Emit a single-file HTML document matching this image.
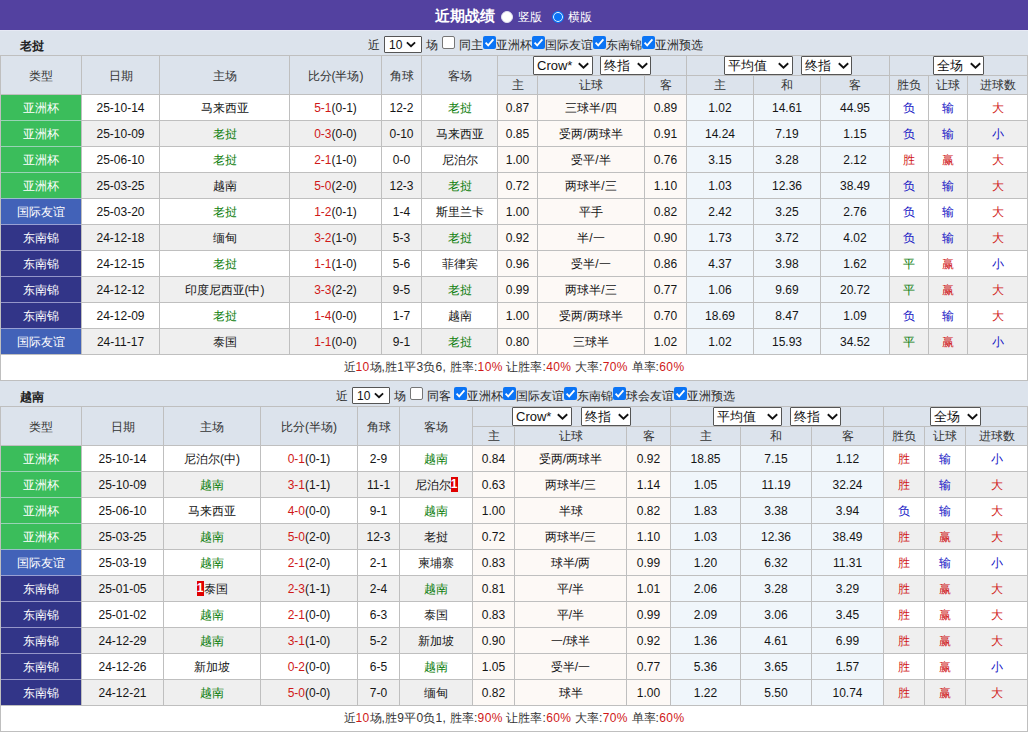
<!DOCTYPE html>
<html><head><meta charset="utf-8"><title>近期战绩</title><style>
*{margin:0;padding:0;box-sizing:border-box}
html,body{width:1029px;height:732px;overflow:hidden;background:#fff}
body{position:relative;font-family:"Liberation Sans",sans-serif;font-size:12px;color:#333}
.r{position:absolute}
.a{letter-spacing:0.37px}
.t{position:absolute;text-align:center;white-space:nowrap}
.sel{position:absolute;background:#fff;border:1px solid #555;border-radius:1px;color:#111;white-space:nowrap}
.cb{position:absolute;width:13px;height:13px;border:1px solid #767676;border-radius:2px;background:#fff}
.cb.on{background:#0b74f5;border:none}
.cb svg{position:absolute;left:0;top:0}
.rad{position:absolute;width:12px;height:12px;border-radius:50%;background:#fff;border:1px solid #e0e0f0}
.rad.on{background:#0a74f5;border:1px solid #0a74f5;box-shadow:inset 0 0 0 1px #fff}

.bd{display:inline-block;background:#e00000;color:#fff;font-weight:bold;width:7px;height:15px;line-height:15px;font-size:12px;text-align:center;vertical-align:-3px;overflow:hidden}
</style></head>
<body>
<div class="r" style="left:0px;top:0px;width:1028px;height:30px;background:#5341a0;"></div><div class="r" style="left:0px;top:30px;width:1028px;height:1px;background:#e6e9f4;"></div><div class="t" style="left:435px;top:1px;width:62px;height:30px;line-height:30px;text-align:left;font-weight:bold;font-size:15px;color:#fff">近期战绩</div><div class="rad" style="left:501px;top:11px"></div><div class="t" style="left:518px;top:2px;width:30px;height:30px;line-height:30px;text-align:left;color:#fff">竖版</div><div class="rad on" style="left:552px;top:11px"></div><div class="t" style="left:568px;top:2px;width:30px;height:30px;line-height:30px;text-align:left;color:#fff">横版</div><div class="r" style="left:0px;top:30px;width:1028px;height:25px;background:#dce3ec;"></div><div class="t" style="left:20px;top:34px;width:60px;height:25px;line-height:25px;text-align:left;font-weight:bold;color:#222">老挝</div><div class="t" style="left:368px;top:33px;width:16px;height:25px;line-height:25px;text-align:left;color:#2a2a2a">近</div><div class="sel" style="left:384px;top:36px;width:38px;height:17px;"><span style="position:absolute;left:4px;top:1px;line-height:15px;font-size:12px">10</span><svg style="position:absolute;left:21px;top:4px" width="10" height="7" viewBox="0 0 10 7"><path d="M0.9 1.3 L5 5.2 L9.1 1.3" fill="none" stroke="#111" stroke-width="1.8"/></svg></div><div class="t" style="left:426px;top:33px;width:16px;height:25px;line-height:25px;text-align:left;color:#2a2a2a">场</div><div class="cb" style="left:442px;top:36px"></div><div class="t" style="left:459px;top:33px;width:28px;height:25px;line-height:25px;text-align:left;color:#2a2a2a">同主</div><div class="cb on" style="left:483px;top:36px"><svg width="13" height="13" viewBox="0 0 13 13"><path d="M2.6 6.6 L5.2 9.3 L10.4 3.4" fill="none" stroke="#fff" stroke-width="1.8"/></svg></div><div class="t" style="left:496px;top:33px;width:40px;height:25px;line-height:25px;text-align:left;color:#2a2a2a">亚洲杯</div><div class="cb on" style="left:532px;top:36px"><svg width="13" height="13" viewBox="0 0 13 13"><path d="M2.6 6.6 L5.2 9.3 L10.4 3.4" fill="none" stroke="#fff" stroke-width="1.8"/></svg></div><div class="t" style="left:545px;top:33px;width:52px;height:25px;line-height:25px;text-align:left;color:#2a2a2a">国际友谊</div><div class="cb on" style="left:593px;top:36px"><svg width="13" height="13" viewBox="0 0 13 13"><path d="M2.6 6.6 L5.2 9.3 L10.4 3.4" fill="none" stroke="#fff" stroke-width="1.8"/></svg></div><div class="t" style="left:606px;top:33px;width:40px;height:25px;line-height:25px;text-align:left;color:#2a2a2a">东南锦</div><div class="cb on" style="left:642px;top:36px"><svg width="13" height="13" viewBox="0 0 13 13"><path d="M2.6 6.6 L5.2 9.3 L10.4 3.4" fill="none" stroke="#fff" stroke-width="1.8"/></svg></div><div class="t" style="left:655px;top:33px;width:52px;height:25px;line-height:25px;text-align:left;color:#2a2a2a">亚洲预选</div><div class="r" style="left:0px;top:30px;width:1028px;height:1px;background:#e6e9f4;"></div><div class="r" style="left:0px;top:55px;width:1027px;height:39px;background:#dce3ec;"></div><div class="r" style="left:0px;top:94px;width:1027px;height:26px;background:#ffffff;"></div><div class="r" style="left:497px;top:94px;width:189px;height:26px;background:#fdf9f6;"></div><div class="r" style="left:686px;top:94px;width:203px;height:26px;background:#f0f6fb;"></div><div class="r" style="left:0px;top:94px;width:81px;height:26px;background:#3bbd5b;"></div><div class="r" style="left:0px;top:120px;width:1027px;height:26px;background:#efefef;"></div><div class="r" style="left:497px;top:120px;width:189px;height:26px;background:#fdf9f6;"></div><div class="r" style="left:686px;top:120px;width:203px;height:26px;background:#f0f6fb;"></div><div class="r" style="left:0px;top:120px;width:81px;height:26px;background:#3bbd5b;"></div><div class="r" style="left:0px;top:146px;width:1027px;height:26px;background:#ffffff;"></div><div class="r" style="left:497px;top:146px;width:189px;height:26px;background:#fdf9f6;"></div><div class="r" style="left:686px;top:146px;width:203px;height:26px;background:#f0f6fb;"></div><div class="r" style="left:0px;top:146px;width:81px;height:26px;background:#3bbd5b;"></div><div class="r" style="left:0px;top:172px;width:1027px;height:26px;background:#efefef;"></div><div class="r" style="left:497px;top:172px;width:189px;height:26px;background:#fdf9f6;"></div><div class="r" style="left:686px;top:172px;width:203px;height:26px;background:#f0f6fb;"></div><div class="r" style="left:0px;top:172px;width:81px;height:26px;background:#3bbd5b;"></div><div class="r" style="left:0px;top:198px;width:1027px;height:26px;background:#ffffff;"></div><div class="r" style="left:497px;top:198px;width:189px;height:26px;background:#fdf9f6;"></div><div class="r" style="left:686px;top:198px;width:203px;height:26px;background:#f0f6fb;"></div><div class="r" style="left:0px;top:198px;width:81px;height:26px;background:#4262b8;"></div><div class="r" style="left:0px;top:224px;width:1027px;height:26px;background:#efefef;"></div><div class="r" style="left:497px;top:224px;width:189px;height:26px;background:#fdf9f6;"></div><div class="r" style="left:686px;top:224px;width:203px;height:26px;background:#f0f6fb;"></div><div class="r" style="left:0px;top:224px;width:81px;height:26px;background:#323588;"></div><div class="r" style="left:0px;top:250px;width:1027px;height:26px;background:#ffffff;"></div><div class="r" style="left:497px;top:250px;width:189px;height:26px;background:#fdf9f6;"></div><div class="r" style="left:686px;top:250px;width:203px;height:26px;background:#f0f6fb;"></div><div class="r" style="left:0px;top:250px;width:81px;height:26px;background:#323588;"></div><div class="r" style="left:0px;top:276px;width:1027px;height:26px;background:#efefef;"></div><div class="r" style="left:497px;top:276px;width:189px;height:26px;background:#fdf9f6;"></div><div class="r" style="left:686px;top:276px;width:203px;height:26px;background:#f0f6fb;"></div><div class="r" style="left:0px;top:276px;width:81px;height:26px;background:#323588;"></div><div class="r" style="left:0px;top:302px;width:1027px;height:26px;background:#ffffff;"></div><div class="r" style="left:497px;top:302px;width:189px;height:26px;background:#fdf9f6;"></div><div class="r" style="left:686px;top:302px;width:203px;height:26px;background:#f0f6fb;"></div><div class="r" style="left:0px;top:302px;width:81px;height:26px;background:#323588;"></div><div class="r" style="left:0px;top:328px;width:1027px;height:26px;background:#efefef;"></div><div class="r" style="left:497px;top:328px;width:189px;height:26px;background:#fdf9f6;"></div><div class="r" style="left:686px;top:328px;width:203px;height:26px;background:#f0f6fb;"></div><div class="r" style="left:0px;top:328px;width:81px;height:26px;background:#4262b8;"></div><div class="r" style="left:0px;top:354px;width:1027px;height:26px;background:#ffffff;"></div><div class="r" style="left:0px;top:55px;width:1027px;height:1px;background:#bfbfbf;"></div><div class="r" style="left:497px;top:75px;width:530px;height:1px;background:#bfbfbf;"></div><div class="r" style="left:0px;top:94px;width:1027px;height:1px;background:#bfbfbf;"></div><div class="r" style="left:0px;top:120px;width:1027px;height:1px;background:#bfbfbf;"></div><div class="r" style="left:0px;top:146px;width:1027px;height:1px;background:#bfbfbf;"></div><div class="r" style="left:0px;top:172px;width:1027px;height:1px;background:#bfbfbf;"></div><div class="r" style="left:0px;top:198px;width:1027px;height:1px;background:#bfbfbf;"></div><div class="r" style="left:0px;top:224px;width:1027px;height:1px;background:#bfbfbf;"></div><div class="r" style="left:0px;top:250px;width:1027px;height:1px;background:#bfbfbf;"></div><div class="r" style="left:0px;top:276px;width:1027px;height:1px;background:#bfbfbf;"></div><div class="r" style="left:0px;top:302px;width:1027px;height:1px;background:#bfbfbf;"></div><div class="r" style="left:0px;top:328px;width:1027px;height:1px;background:#bfbfbf;"></div><div class="r" style="left:0px;top:354px;width:1027px;height:1px;background:#bfbfbf;"></div><div class="r" style="left:0px;top:380px;width:1027px;height:1px;background:#bfbfbf;"></div><div class="r" style="left:0px;top:55px;width:1px;height:326px;background:#bfbfbf;"></div><div class="r" style="left:81px;top:55px;width:1px;height:299px;background:#bfbfbf;"></div><div class="r" style="left:159px;top:55px;width:1px;height:299px;background:#bfbfbf;"></div><div class="r" style="left:289px;top:55px;width:1px;height:299px;background:#bfbfbf;"></div><div class="r" style="left:381px;top:55px;width:1px;height:299px;background:#bfbfbf;"></div><div class="r" style="left:421px;top:55px;width:1px;height:299px;background:#bfbfbf;"></div><div class="r" style="left:497px;top:55px;width:1px;height:299px;background:#bfbfbf;"></div><div class="r" style="left:537px;top:75px;width:1px;height:279px;background:#bfbfbf;"></div><div class="r" style="left:644px;top:75px;width:1px;height:279px;background:#bfbfbf;"></div><div class="r" style="left:686px;top:55px;width:1px;height:299px;background:#bfbfbf;"></div><div class="r" style="left:753px;top:75px;width:1px;height:279px;background:#bfbfbf;"></div><div class="r" style="left:820px;top:75px;width:1px;height:279px;background:#bfbfbf;"></div><div class="r" style="left:889px;top:55px;width:1px;height:299px;background:#bfbfbf;"></div><div class="r" style="left:928px;top:75px;width:1px;height:279px;background:#bfbfbf;"></div><div class="r" style="left:967px;top:75px;width:1px;height:279px;background:#bfbfbf;"></div><div class="r" style="left:1027px;top:55px;width:1px;height:326px;background:#bfbfbf;"></div><div class="r" style="left:1px;top:120px;width:80px;height:1px;background:rgb(153,211,181);"></div><div class="r" style="left:1px;top:146px;width:80px;height:1px;background:rgb(153,211,181);"></div><div class="r" style="left:1px;top:172px;width:80px;height:1px;background:rgb(153,211,181);"></div><div class="r" style="left:1px;top:198px;width:80px;height:1px;background:rgb(154,191,202);"></div><div class="r" style="left:1px;top:224px;width:80px;height:1px;background:rgb(152,160,212);"></div><div class="r" style="left:1px;top:250px;width:80px;height:1px;background:rgb(149,150,201);"></div><div class="r" style="left:1px;top:276px;width:80px;height:1px;background:rgb(149,150,201);"></div><div class="r" style="left:1px;top:302px;width:80px;height:1px;background:rgb(149,150,201);"></div><div class="r" style="left:1px;top:328px;width:80px;height:1px;background:rgb(152,160,212);"></div><div class="t" style="left:1px;top:57px;width:80px;height:38px;line-height:38px;color:#333">类型</div><div class="t" style="left:82px;top:57px;width:77px;height:38px;line-height:38px;color:#333">日期</div><div class="t" style="left:160px;top:57px;width:129px;height:38px;line-height:38px;color:#333">主场</div><div class="t" style="left:290px;top:57px;width:91px;height:38px;line-height:38px;color:#333">比分(半场)</div><div class="t" style="left:382px;top:57px;width:39px;height:38px;line-height:38px;color:#333">角球</div><div class="t" style="left:422px;top:57px;width:75px;height:38px;line-height:38px;color:#333">客场</div><div class="t" style="left:498px;top:76px;width:39px;height:18px;line-height:18px;color:#333">主</div><div class="t" style="left:538px;top:76px;width:106px;height:18px;line-height:18px;color:#333">让球</div><div class="t" style="left:645px;top:76px;width:41px;height:18px;line-height:18px;color:#333">客</div><div class="t" style="left:687px;top:76px;width:66px;height:18px;line-height:18px;color:#333">主</div><div class="t" style="left:754px;top:76px;width:66px;height:18px;line-height:18px;color:#333">和</div><div class="t" style="left:821px;top:76px;width:68px;height:18px;line-height:18px;color:#333">客</div><div class="t" style="left:890px;top:76px;width:38px;height:18px;line-height:18px;color:#333">胜负</div><div class="t" style="left:929px;top:76px;width:38px;height:18px;line-height:18px;color:#333">让球</div><div class="t" style="left:968px;top:76px;width:59px;height:18px;line-height:18px;color:#333">进球数</div><div class="sel" style="left:533px;top:56px;width:60px;height:19px;"><span style="position:absolute;left:3px;top:0px;line-height:17px;font-size:13px">Crow*</span><svg style="position:absolute;left:44px;top:5px" width="11" height="7" viewBox="0 0 11 7"><path d="M0.8 1.2 L5.5 5.6 L10.2 1.2" fill="none" stroke="#111" stroke-width="1.9"/></svg></div><div class="sel" style="left:600px;top:56px;width:51px;height:19px;"><span style="position:absolute;left:3px;top:0px;line-height:17px;font-size:13px">终指</span><svg style="position:absolute;left:36px;top:5px" width="11" height="7" viewBox="0 0 11 7"><path d="M0.8 1.2 L5.5 5.6 L10.2 1.2" fill="none" stroke="#111" stroke-width="1.9"/></svg></div><div class="sel" style="left:724px;top:56px;width:69px;height:19px;"><span style="position:absolute;left:3px;top:0px;line-height:17px;font-size:13px">平均值</span><svg style="position:absolute;left:53px;top:5px" width="11" height="7" viewBox="0 0 11 7"><path d="M0.8 1.2 L5.5 5.6 L10.2 1.2" fill="none" stroke="#111" stroke-width="1.9"/></svg></div><div class="sel" style="left:801px;top:56px;width:51px;height:19px;"><span style="position:absolute;left:3px;top:0px;line-height:17px;font-size:13px">终指</span><svg style="position:absolute;left:36px;top:5px" width="11" height="7" viewBox="0 0 11 7"><path d="M0.8 1.2 L5.5 5.6 L10.2 1.2" fill="none" stroke="#111" stroke-width="1.9"/></svg></div><div class="sel" style="left:933px;top:56px;width:51px;height:19px;"><span style="position:absolute;left:3px;top:0px;line-height:17px;font-size:13px">全场</span><svg style="position:absolute;left:36px;top:5px" width="11" height="7" viewBox="0 0 11 7"><path d="M0.8 1.2 L5.5 5.6 L10.2 1.2" fill="none" stroke="#111" stroke-width="1.9"/></svg></div><div class="t" style="left:1px;top:96px;width:80px;height:25px;line-height:25px;color:#fff">亚洲杯</div><div class="t" style="left:82px;top:96px;width:77px;height:25px;line-height:25px;color:#151515">25-10-14</div><div class="t" style="left:160px;top:96px;width:129px;height:25px;line-height:25px;color:#151515">马来西亚</div><div class="t" style="left:290px;top:96px;width:91px;height:25px;line-height:25px;color:#151515"><span style="color:#d01818">5-1</span>(0-1)</div><div class="t" style="left:382px;top:96px;width:39px;height:25px;line-height:25px;color:#151515">12-2</div><div class="t" style="left:422px;top:96px;width:75px;height:25px;line-height:25px;color:#151515"><span style="color:#0b7d0b">老挝</span></div><div class="t" style="left:498px;top:96px;width:39px;height:25px;line-height:25px;color:#151515">0.87</div><div class="t" style="left:538px;top:96px;width:106px;height:25px;line-height:25px;color:#151515">三球半/四</div><div class="t" style="left:645px;top:96px;width:41px;height:25px;line-height:25px;color:#151515">0.89</div><div class="t" style="left:687px;top:96px;width:66px;height:25px;line-height:25px;color:#151515">1.02</div><div class="t" style="left:754px;top:96px;width:66px;height:25px;line-height:25px;color:#151515">14.61</div><div class="t" style="left:821px;top:96px;width:68px;height:25px;line-height:25px;color:#151515">44.95</div><div class="t" style="left:890px;top:96px;width:38px;height:25px;line-height:25px;color:#151515"><span style="color:#1212c4">负</span></div><div class="t" style="left:929px;top:96px;width:38px;height:25px;line-height:25px;color:#151515"><span style="color:#1212c4">输</span></div><div class="t" style="left:968px;top:96px;width:59px;height:25px;line-height:25px;color:#151515"><span style="color:#d01818">大</span></div><div class="t" style="left:1px;top:122px;width:80px;height:25px;line-height:25px;color:#fff">亚洲杯</div><div class="t" style="left:82px;top:122px;width:77px;height:25px;line-height:25px;color:#151515">25-10-09</div><div class="t" style="left:160px;top:122px;width:129px;height:25px;line-height:25px;color:#151515"><span style="color:#0b7d0b">老挝</span></div><div class="t" style="left:290px;top:122px;width:91px;height:25px;line-height:25px;color:#151515"><span style="color:#d01818">0-3</span>(0-0)</div><div class="t" style="left:382px;top:122px;width:39px;height:25px;line-height:25px;color:#151515">0-10</div><div class="t" style="left:422px;top:122px;width:75px;height:25px;line-height:25px;color:#151515">马来西亚</div><div class="t" style="left:498px;top:122px;width:39px;height:25px;line-height:25px;color:#151515">0.85</div><div class="t" style="left:538px;top:122px;width:106px;height:25px;line-height:25px;color:#151515">受两/两球半</div><div class="t" style="left:645px;top:122px;width:41px;height:25px;line-height:25px;color:#151515">0.91</div><div class="t" style="left:687px;top:122px;width:66px;height:25px;line-height:25px;color:#151515">14.24</div><div class="t" style="left:754px;top:122px;width:66px;height:25px;line-height:25px;color:#151515">7.19</div><div class="t" style="left:821px;top:122px;width:68px;height:25px;line-height:25px;color:#151515">1.15</div><div class="t" style="left:890px;top:122px;width:38px;height:25px;line-height:25px;color:#151515"><span style="color:#1212c4">负</span></div><div class="t" style="left:929px;top:122px;width:38px;height:25px;line-height:25px;color:#151515"><span style="color:#1212c4">输</span></div><div class="t" style="left:968px;top:122px;width:59px;height:25px;line-height:25px;color:#151515"><span style="color:#1212c4">小</span></div><div class="t" style="left:1px;top:148px;width:80px;height:25px;line-height:25px;color:#fff">亚洲杯</div><div class="t" style="left:82px;top:148px;width:77px;height:25px;line-height:25px;color:#151515">25-06-10</div><div class="t" style="left:160px;top:148px;width:129px;height:25px;line-height:25px;color:#151515"><span style="color:#0b7d0b">老挝</span></div><div class="t" style="left:290px;top:148px;width:91px;height:25px;line-height:25px;color:#151515"><span style="color:#d01818">2-1</span>(1-0)</div><div class="t" style="left:382px;top:148px;width:39px;height:25px;line-height:25px;color:#151515">0-0</div><div class="t" style="left:422px;top:148px;width:75px;height:25px;line-height:25px;color:#151515">尼泊尔</div><div class="t" style="left:498px;top:148px;width:39px;height:25px;line-height:25px;color:#151515">1.00</div><div class="t" style="left:538px;top:148px;width:106px;height:25px;line-height:25px;color:#151515">受平/半</div><div class="t" style="left:645px;top:148px;width:41px;height:25px;line-height:25px;color:#151515">0.76</div><div class="t" style="left:687px;top:148px;width:66px;height:25px;line-height:25px;color:#151515">3.15</div><div class="t" style="left:754px;top:148px;width:66px;height:25px;line-height:25px;color:#151515">3.28</div><div class="t" style="left:821px;top:148px;width:68px;height:25px;line-height:25px;color:#151515">2.12</div><div class="t" style="left:890px;top:148px;width:38px;height:25px;line-height:25px;color:#151515"><span style="color:#d01818">胜</span></div><div class="t" style="left:929px;top:148px;width:38px;height:25px;line-height:25px;color:#151515"><span style="color:#d01818">赢</span></div><div class="t" style="left:968px;top:148px;width:59px;height:25px;line-height:25px;color:#151515"><span style="color:#d01818">大</span></div><div class="t" style="left:1px;top:174px;width:80px;height:25px;line-height:25px;color:#fff">亚洲杯</div><div class="t" style="left:82px;top:174px;width:77px;height:25px;line-height:25px;color:#151515">25-03-25</div><div class="t" style="left:160px;top:174px;width:129px;height:25px;line-height:25px;color:#151515">越南</div><div class="t" style="left:290px;top:174px;width:91px;height:25px;line-height:25px;color:#151515"><span style="color:#d01818">5-0</span>(2-0)</div><div class="t" style="left:382px;top:174px;width:39px;height:25px;line-height:25px;color:#151515">12-3</div><div class="t" style="left:422px;top:174px;width:75px;height:25px;line-height:25px;color:#151515"><span style="color:#0b7d0b">老挝</span></div><div class="t" style="left:498px;top:174px;width:39px;height:25px;line-height:25px;color:#151515">0.72</div><div class="t" style="left:538px;top:174px;width:106px;height:25px;line-height:25px;color:#151515">两球半/三</div><div class="t" style="left:645px;top:174px;width:41px;height:25px;line-height:25px;color:#151515">1.10</div><div class="t" style="left:687px;top:174px;width:66px;height:25px;line-height:25px;color:#151515">1.03</div><div class="t" style="left:754px;top:174px;width:66px;height:25px;line-height:25px;color:#151515">12.36</div><div class="t" style="left:821px;top:174px;width:68px;height:25px;line-height:25px;color:#151515">38.49</div><div class="t" style="left:890px;top:174px;width:38px;height:25px;line-height:25px;color:#151515"><span style="color:#1212c4">负</span></div><div class="t" style="left:929px;top:174px;width:38px;height:25px;line-height:25px;color:#151515"><span style="color:#1212c4">输</span></div><div class="t" style="left:968px;top:174px;width:59px;height:25px;line-height:25px;color:#151515"><span style="color:#d01818">大</span></div><div class="t" style="left:1px;top:200px;width:80px;height:25px;line-height:25px;color:#fff">国际友谊</div><div class="t" style="left:82px;top:200px;width:77px;height:25px;line-height:25px;color:#151515">25-03-20</div><div class="t" style="left:160px;top:200px;width:129px;height:25px;line-height:25px;color:#151515"><span style="color:#0b7d0b">老挝</span></div><div class="t" style="left:290px;top:200px;width:91px;height:25px;line-height:25px;color:#151515"><span style="color:#d01818">1-2</span>(0-1)</div><div class="t" style="left:382px;top:200px;width:39px;height:25px;line-height:25px;color:#151515">1-4</div><div class="t" style="left:422px;top:200px;width:75px;height:25px;line-height:25px;color:#151515">斯里兰卡</div><div class="t" style="left:498px;top:200px;width:39px;height:25px;line-height:25px;color:#151515">1.00</div><div class="t" style="left:538px;top:200px;width:106px;height:25px;line-height:25px;color:#151515">平手</div><div class="t" style="left:645px;top:200px;width:41px;height:25px;line-height:25px;color:#151515">0.82</div><div class="t" style="left:687px;top:200px;width:66px;height:25px;line-height:25px;color:#151515">2.42</div><div class="t" style="left:754px;top:200px;width:66px;height:25px;line-height:25px;color:#151515">3.25</div><div class="t" style="left:821px;top:200px;width:68px;height:25px;line-height:25px;color:#151515">2.76</div><div class="t" style="left:890px;top:200px;width:38px;height:25px;line-height:25px;color:#151515"><span style="color:#1212c4">负</span></div><div class="t" style="left:929px;top:200px;width:38px;height:25px;line-height:25px;color:#151515"><span style="color:#1212c4">输</span></div><div class="t" style="left:968px;top:200px;width:59px;height:25px;line-height:25px;color:#151515"><span style="color:#d01818">大</span></div><div class="t" style="left:1px;top:226px;width:80px;height:25px;line-height:25px;color:#fff">东南锦</div><div class="t" style="left:82px;top:226px;width:77px;height:25px;line-height:25px;color:#151515">24-12-18</div><div class="t" style="left:160px;top:226px;width:129px;height:25px;line-height:25px;color:#151515">缅甸</div><div class="t" style="left:290px;top:226px;width:91px;height:25px;line-height:25px;color:#151515"><span style="color:#d01818">3-2</span>(1-0)</div><div class="t" style="left:382px;top:226px;width:39px;height:25px;line-height:25px;color:#151515">5-3</div><div class="t" style="left:422px;top:226px;width:75px;height:25px;line-height:25px;color:#151515"><span style="color:#0b7d0b">老挝</span></div><div class="t" style="left:498px;top:226px;width:39px;height:25px;line-height:25px;color:#151515">0.92</div><div class="t" style="left:538px;top:226px;width:106px;height:25px;line-height:25px;color:#151515">半/一</div><div class="t" style="left:645px;top:226px;width:41px;height:25px;line-height:25px;color:#151515">0.90</div><div class="t" style="left:687px;top:226px;width:66px;height:25px;line-height:25px;color:#151515">1.73</div><div class="t" style="left:754px;top:226px;width:66px;height:25px;line-height:25px;color:#151515">3.72</div><div class="t" style="left:821px;top:226px;width:68px;height:25px;line-height:25px;color:#151515">4.02</div><div class="t" style="left:890px;top:226px;width:38px;height:25px;line-height:25px;color:#151515"><span style="color:#1212c4">负</span></div><div class="t" style="left:929px;top:226px;width:38px;height:25px;line-height:25px;color:#151515"><span style="color:#1212c4">输</span></div><div class="t" style="left:968px;top:226px;width:59px;height:25px;line-height:25px;color:#151515"><span style="color:#d01818">大</span></div><div class="t" style="left:1px;top:252px;width:80px;height:25px;line-height:25px;color:#fff">东南锦</div><div class="t" style="left:82px;top:252px;width:77px;height:25px;line-height:25px;color:#151515">24-12-15</div><div class="t" style="left:160px;top:252px;width:129px;height:25px;line-height:25px;color:#151515"><span style="color:#0b7d0b">老挝</span></div><div class="t" style="left:290px;top:252px;width:91px;height:25px;line-height:25px;color:#151515"><span style="color:#d01818">1-1</span>(1-0)</div><div class="t" style="left:382px;top:252px;width:39px;height:25px;line-height:25px;color:#151515">5-6</div><div class="t" style="left:422px;top:252px;width:75px;height:25px;line-height:25px;color:#151515">菲律宾</div><div class="t" style="left:498px;top:252px;width:39px;height:25px;line-height:25px;color:#151515">0.96</div><div class="t" style="left:538px;top:252px;width:106px;height:25px;line-height:25px;color:#151515">受半/一</div><div class="t" style="left:645px;top:252px;width:41px;height:25px;line-height:25px;color:#151515">0.86</div><div class="t" style="left:687px;top:252px;width:66px;height:25px;line-height:25px;color:#151515">4.37</div><div class="t" style="left:754px;top:252px;width:66px;height:25px;line-height:25px;color:#151515">3.98</div><div class="t" style="left:821px;top:252px;width:68px;height:25px;line-height:25px;color:#151515">1.62</div><div class="t" style="left:890px;top:252px;width:38px;height:25px;line-height:25px;color:#151515"><span style="color:#0b7d0b">平</span></div><div class="t" style="left:929px;top:252px;width:38px;height:25px;line-height:25px;color:#151515"><span style="color:#d01818">赢</span></div><div class="t" style="left:968px;top:252px;width:59px;height:25px;line-height:25px;color:#151515"><span style="color:#1212c4">小</span></div><div class="t" style="left:1px;top:278px;width:80px;height:25px;line-height:25px;color:#fff">东南锦</div><div class="t" style="left:82px;top:278px;width:77px;height:25px;line-height:25px;color:#151515">24-12-12</div><div class="t" style="left:160px;top:278px;width:129px;height:25px;line-height:25px;color:#151515">印度尼西亚(中)</div><div class="t" style="left:290px;top:278px;width:91px;height:25px;line-height:25px;color:#151515"><span style="color:#d01818">3-3</span>(2-2)</div><div class="t" style="left:382px;top:278px;width:39px;height:25px;line-height:25px;color:#151515">9-5</div><div class="t" style="left:422px;top:278px;width:75px;height:25px;line-height:25px;color:#151515"><span style="color:#0b7d0b">老挝</span></div><div class="t" style="left:498px;top:278px;width:39px;height:25px;line-height:25px;color:#151515">0.99</div><div class="t" style="left:538px;top:278px;width:106px;height:25px;line-height:25px;color:#151515">两球半/三</div><div class="t" style="left:645px;top:278px;width:41px;height:25px;line-height:25px;color:#151515">0.77</div><div class="t" style="left:687px;top:278px;width:66px;height:25px;line-height:25px;color:#151515">1.06</div><div class="t" style="left:754px;top:278px;width:66px;height:25px;line-height:25px;color:#151515">9.69</div><div class="t" style="left:821px;top:278px;width:68px;height:25px;line-height:25px;color:#151515">20.72</div><div class="t" style="left:890px;top:278px;width:38px;height:25px;line-height:25px;color:#151515"><span style="color:#0b7d0b">平</span></div><div class="t" style="left:929px;top:278px;width:38px;height:25px;line-height:25px;color:#151515"><span style="color:#d01818">赢</span></div><div class="t" style="left:968px;top:278px;width:59px;height:25px;line-height:25px;color:#151515"><span style="color:#d01818">大</span></div><div class="t" style="left:1px;top:304px;width:80px;height:25px;line-height:25px;color:#fff">东南锦</div><div class="t" style="left:82px;top:304px;width:77px;height:25px;line-height:25px;color:#151515">24-12-09</div><div class="t" style="left:160px;top:304px;width:129px;height:25px;line-height:25px;color:#151515"><span style="color:#0b7d0b">老挝</span></div><div class="t" style="left:290px;top:304px;width:91px;height:25px;line-height:25px;color:#151515"><span style="color:#d01818">1-4</span>(0-0)</div><div class="t" style="left:382px;top:304px;width:39px;height:25px;line-height:25px;color:#151515">1-7</div><div class="t" style="left:422px;top:304px;width:75px;height:25px;line-height:25px;color:#151515">越南</div><div class="t" style="left:498px;top:304px;width:39px;height:25px;line-height:25px;color:#151515">1.00</div><div class="t" style="left:538px;top:304px;width:106px;height:25px;line-height:25px;color:#151515">受两/两球半</div><div class="t" style="left:645px;top:304px;width:41px;height:25px;line-height:25px;color:#151515">0.70</div><div class="t" style="left:687px;top:304px;width:66px;height:25px;line-height:25px;color:#151515">18.69</div><div class="t" style="left:754px;top:304px;width:66px;height:25px;line-height:25px;color:#151515">8.47</div><div class="t" style="left:821px;top:304px;width:68px;height:25px;line-height:25px;color:#151515">1.09</div><div class="t" style="left:890px;top:304px;width:38px;height:25px;line-height:25px;color:#151515"><span style="color:#1212c4">负</span></div><div class="t" style="left:929px;top:304px;width:38px;height:25px;line-height:25px;color:#151515"><span style="color:#1212c4">输</span></div><div class="t" style="left:968px;top:304px;width:59px;height:25px;line-height:25px;color:#151515"><span style="color:#d01818">大</span></div><div class="t" style="left:1px;top:330px;width:80px;height:25px;line-height:25px;color:#fff">国际友谊</div><div class="t" style="left:82px;top:330px;width:77px;height:25px;line-height:25px;color:#151515">24-11-17</div><div class="t" style="left:160px;top:330px;width:129px;height:25px;line-height:25px;color:#151515">泰国</div><div class="t" style="left:290px;top:330px;width:91px;height:25px;line-height:25px;color:#151515"><span style="color:#d01818">1-1</span>(0-0)</div><div class="t" style="left:382px;top:330px;width:39px;height:25px;line-height:25px;color:#151515">9-1</div><div class="t" style="left:422px;top:330px;width:75px;height:25px;line-height:25px;color:#151515"><span style="color:#0b7d0b">老挝</span></div><div class="t" style="left:498px;top:330px;width:39px;height:25px;line-height:25px;color:#151515">0.80</div><div class="t" style="left:538px;top:330px;width:106px;height:25px;line-height:25px;color:#151515">三球半</div><div class="t" style="left:645px;top:330px;width:41px;height:25px;line-height:25px;color:#151515">1.02</div><div class="t" style="left:687px;top:330px;width:66px;height:25px;line-height:25px;color:#151515">1.02</div><div class="t" style="left:754px;top:330px;width:66px;height:25px;line-height:25px;color:#151515">15.93</div><div class="t" style="left:821px;top:330px;width:68px;height:25px;line-height:25px;color:#151515">34.52</div><div class="t" style="left:890px;top:330px;width:38px;height:25px;line-height:25px;color:#151515"><span style="color:#0b7d0b">平</span></div><div class="t" style="left:929px;top:330px;width:38px;height:25px;line-height:25px;color:#151515"><span style="color:#d01818">赢</span></div><div class="t" style="left:968px;top:330px;width:59px;height:25px;line-height:25px;color:#151515"><span style="color:#1212c4">小</span></div><div class="t" style="left:1px;top:355px;width:1026px;height:25px;line-height:25px;color:#333">近<span class="a" style="color:#d01818">10</span>场<span class="a">,</span>胜<span class="a">1</span>平<span class="a">3</span>负<span class="a">6, </span>胜率<span class="a">:</span><span class="a" style="color:#d01818">10%</span><span class="a"> </span>让胜率<span class="a">:</span><span class="a" style="color:#d01818">40%</span><span class="a"> </span>大率<span class="a">:</span><span class="a" style="color:#d01818">70%</span><span class="a"> </span>单率<span class="a">:</span><span class="a" style="color:#d01818">60%</span></div><div class="r" style="left:0px;top:381px;width:1028px;height:25px;background:#dce3ec;"></div><div class="t" style="left:20px;top:385px;width:60px;height:25px;line-height:25px;text-align:left;font-weight:bold;color:#222">越南</div><div class="t" style="left:336px;top:384px;width:16px;height:25px;line-height:25px;text-align:left;color:#2a2a2a">近</div><div class="sel" style="left:352px;top:387px;width:38px;height:17px;"><span style="position:absolute;left:4px;top:1px;line-height:15px;font-size:12px">10</span><svg style="position:absolute;left:21px;top:4px" width="10" height="7" viewBox="0 0 10 7"><path d="M0.9 1.3 L5 5.2 L9.1 1.3" fill="none" stroke="#111" stroke-width="1.8"/></svg></div><div class="t" style="left:394px;top:384px;width:16px;height:25px;line-height:25px;text-align:left;color:#2a2a2a">场</div><div class="cb" style="left:410px;top:387px"></div><div class="t" style="left:427px;top:384px;width:28px;height:25px;line-height:25px;text-align:left;color:#2a2a2a">同客</div><div class="cb on" style="left:454px;top:387px"><svg width="13" height="13" viewBox="0 0 13 13"><path d="M2.6 6.6 L5.2 9.3 L10.4 3.4" fill="none" stroke="#fff" stroke-width="1.8"/></svg></div><div class="t" style="left:467px;top:384px;width:40px;height:25px;line-height:25px;text-align:left;color:#2a2a2a">亚洲杯</div><div class="cb on" style="left:503px;top:387px"><svg width="13" height="13" viewBox="0 0 13 13"><path d="M2.6 6.6 L5.2 9.3 L10.4 3.4" fill="none" stroke="#fff" stroke-width="1.8"/></svg></div><div class="t" style="left:516px;top:384px;width:52px;height:25px;line-height:25px;text-align:left;color:#2a2a2a">国际友谊</div><div class="cb on" style="left:564px;top:387px"><svg width="13" height="13" viewBox="0 0 13 13"><path d="M2.6 6.6 L5.2 9.3 L10.4 3.4" fill="none" stroke="#fff" stroke-width="1.8"/></svg></div><div class="t" style="left:577px;top:384px;width:40px;height:25px;line-height:25px;text-align:left;color:#2a2a2a">东南锦</div><div class="cb on" style="left:613px;top:387px"><svg width="13" height="13" viewBox="0 0 13 13"><path d="M2.6 6.6 L5.2 9.3 L10.4 3.4" fill="none" stroke="#fff" stroke-width="1.8"/></svg></div><div class="t" style="left:626px;top:384px;width:52px;height:25px;line-height:25px;text-align:left;color:#2a2a2a">球会友谊</div><div class="cb on" style="left:674px;top:387px"><svg width="13" height="13" viewBox="0 0 13 13"><path d="M2.6 6.6 L5.2 9.3 L10.4 3.4" fill="none" stroke="#fff" stroke-width="1.8"/></svg></div><div class="t" style="left:687px;top:384px;width:52px;height:25px;line-height:25px;text-align:left;color:#2a2a2a">亚洲预选</div><div class="r" style="left:0px;top:406px;width:1027px;height:39px;background:#dce3ec;"></div><div class="r" style="left:0px;top:445px;width:1027px;height:26px;background:#ffffff;"></div><div class="r" style="left:472px;top:445px;width:198px;height:26px;background:#fdf9f6;"></div><div class="r" style="left:670px;top:445px;width:213px;height:26px;background:#f0f6fb;"></div><div class="r" style="left:0px;top:445px;width:81px;height:26px;background:#3bbd5b;"></div><div class="r" style="left:0px;top:471px;width:1027px;height:26px;background:#efefef;"></div><div class="r" style="left:472px;top:471px;width:198px;height:26px;background:#fdf9f6;"></div><div class="r" style="left:670px;top:471px;width:213px;height:26px;background:#f0f6fb;"></div><div class="r" style="left:0px;top:471px;width:81px;height:26px;background:#3bbd5b;"></div><div class="r" style="left:0px;top:497px;width:1027px;height:26px;background:#ffffff;"></div><div class="r" style="left:472px;top:497px;width:198px;height:26px;background:#fdf9f6;"></div><div class="r" style="left:670px;top:497px;width:213px;height:26px;background:#f0f6fb;"></div><div class="r" style="left:0px;top:497px;width:81px;height:26px;background:#3bbd5b;"></div><div class="r" style="left:0px;top:523px;width:1027px;height:26px;background:#efefef;"></div><div class="r" style="left:472px;top:523px;width:198px;height:26px;background:#fdf9f6;"></div><div class="r" style="left:670px;top:523px;width:213px;height:26px;background:#f0f6fb;"></div><div class="r" style="left:0px;top:523px;width:81px;height:26px;background:#3bbd5b;"></div><div class="r" style="left:0px;top:549px;width:1027px;height:26px;background:#ffffff;"></div><div class="r" style="left:472px;top:549px;width:198px;height:26px;background:#fdf9f6;"></div><div class="r" style="left:670px;top:549px;width:213px;height:26px;background:#f0f6fb;"></div><div class="r" style="left:0px;top:549px;width:81px;height:26px;background:#4262b8;"></div><div class="r" style="left:0px;top:575px;width:1027px;height:26px;background:#efefef;"></div><div class="r" style="left:472px;top:575px;width:198px;height:26px;background:#fdf9f6;"></div><div class="r" style="left:670px;top:575px;width:213px;height:26px;background:#f0f6fb;"></div><div class="r" style="left:0px;top:575px;width:81px;height:26px;background:#323588;"></div><div class="r" style="left:0px;top:601px;width:1027px;height:26px;background:#ffffff;"></div><div class="r" style="left:472px;top:601px;width:198px;height:26px;background:#fdf9f6;"></div><div class="r" style="left:670px;top:601px;width:213px;height:26px;background:#f0f6fb;"></div><div class="r" style="left:0px;top:601px;width:81px;height:26px;background:#323588;"></div><div class="r" style="left:0px;top:627px;width:1027px;height:26px;background:#efefef;"></div><div class="r" style="left:472px;top:627px;width:198px;height:26px;background:#fdf9f6;"></div><div class="r" style="left:670px;top:627px;width:213px;height:26px;background:#f0f6fb;"></div><div class="r" style="left:0px;top:627px;width:81px;height:26px;background:#323588;"></div><div class="r" style="left:0px;top:653px;width:1027px;height:26px;background:#ffffff;"></div><div class="r" style="left:472px;top:653px;width:198px;height:26px;background:#fdf9f6;"></div><div class="r" style="left:670px;top:653px;width:213px;height:26px;background:#f0f6fb;"></div><div class="r" style="left:0px;top:653px;width:81px;height:26px;background:#323588;"></div><div class="r" style="left:0px;top:679px;width:1027px;height:26px;background:#efefef;"></div><div class="r" style="left:472px;top:679px;width:198px;height:26px;background:#fdf9f6;"></div><div class="r" style="left:670px;top:679px;width:213px;height:26px;background:#f0f6fb;"></div><div class="r" style="left:0px;top:679px;width:81px;height:26px;background:#323588;"></div><div class="r" style="left:0px;top:705px;width:1027px;height:26px;background:#ffffff;"></div><div class="r" style="left:0px;top:406px;width:1027px;height:1px;background:#bfbfbf;"></div><div class="r" style="left:472px;top:426px;width:555px;height:1px;background:#bfbfbf;"></div><div class="r" style="left:0px;top:445px;width:1027px;height:1px;background:#bfbfbf;"></div><div class="r" style="left:0px;top:471px;width:1027px;height:1px;background:#bfbfbf;"></div><div class="r" style="left:0px;top:497px;width:1027px;height:1px;background:#bfbfbf;"></div><div class="r" style="left:0px;top:523px;width:1027px;height:1px;background:#bfbfbf;"></div><div class="r" style="left:0px;top:549px;width:1027px;height:1px;background:#bfbfbf;"></div><div class="r" style="left:0px;top:575px;width:1027px;height:1px;background:#bfbfbf;"></div><div class="r" style="left:0px;top:601px;width:1027px;height:1px;background:#bfbfbf;"></div><div class="r" style="left:0px;top:627px;width:1027px;height:1px;background:#bfbfbf;"></div><div class="r" style="left:0px;top:653px;width:1027px;height:1px;background:#bfbfbf;"></div><div class="r" style="left:0px;top:679px;width:1027px;height:1px;background:#bfbfbf;"></div><div class="r" style="left:0px;top:705px;width:1027px;height:1px;background:#bfbfbf;"></div><div class="r" style="left:0px;top:731px;width:1027px;height:1px;background:#bfbfbf;"></div><div class="r" style="left:0px;top:406px;width:1px;height:326px;background:#bfbfbf;"></div><div class="r" style="left:81px;top:406px;width:1px;height:299px;background:#bfbfbf;"></div><div class="r" style="left:163px;top:406px;width:1px;height:299px;background:#bfbfbf;"></div><div class="r" style="left:260px;top:406px;width:1px;height:299px;background:#bfbfbf;"></div><div class="r" style="left:357px;top:406px;width:1px;height:299px;background:#bfbfbf;"></div><div class="r" style="left:399px;top:406px;width:1px;height:299px;background:#bfbfbf;"></div><div class="r" style="left:472px;top:406px;width:1px;height:299px;background:#bfbfbf;"></div><div class="r" style="left:514px;top:426px;width:1px;height:279px;background:#bfbfbf;"></div><div class="r" style="left:626px;top:426px;width:1px;height:279px;background:#bfbfbf;"></div><div class="r" style="left:670px;top:406px;width:1px;height:299px;background:#bfbfbf;"></div><div class="r" style="left:740px;top:426px;width:1px;height:279px;background:#bfbfbf;"></div><div class="r" style="left:811px;top:426px;width:1px;height:279px;background:#bfbfbf;"></div><div class="r" style="left:883px;top:406px;width:1px;height:299px;background:#bfbfbf;"></div><div class="r" style="left:924px;top:426px;width:1px;height:279px;background:#bfbfbf;"></div><div class="r" style="left:965px;top:426px;width:1px;height:279px;background:#bfbfbf;"></div><div class="r" style="left:1027px;top:406px;width:1px;height:326px;background:#bfbfbf;"></div><div class="r" style="left:1px;top:471px;width:80px;height:1px;background:rgb(153,211,181);"></div><div class="r" style="left:1px;top:497px;width:80px;height:1px;background:rgb(153,211,181);"></div><div class="r" style="left:1px;top:523px;width:80px;height:1px;background:rgb(153,211,181);"></div><div class="r" style="left:1px;top:549px;width:80px;height:1px;background:rgb(154,191,202);"></div><div class="r" style="left:1px;top:575px;width:80px;height:1px;background:rgb(152,160,212);"></div><div class="r" style="left:1px;top:601px;width:80px;height:1px;background:rgb(149,150,201);"></div><div class="r" style="left:1px;top:627px;width:80px;height:1px;background:rgb(149,150,201);"></div><div class="r" style="left:1px;top:653px;width:80px;height:1px;background:rgb(149,150,201);"></div><div class="r" style="left:1px;top:679px;width:80px;height:1px;background:rgb(149,150,201);"></div><div class="t" style="left:1px;top:408px;width:80px;height:38px;line-height:38px;color:#333">类型</div><div class="t" style="left:82px;top:408px;width:81px;height:38px;line-height:38px;color:#333">日期</div><div class="t" style="left:164px;top:408px;width:96px;height:38px;line-height:38px;color:#333">主场</div><div class="t" style="left:261px;top:408px;width:96px;height:38px;line-height:38px;color:#333">比分(半场)</div><div class="t" style="left:358px;top:408px;width:41px;height:38px;line-height:38px;color:#333">角球</div><div class="t" style="left:400px;top:408px;width:72px;height:38px;line-height:38px;color:#333">客场</div><div class="t" style="left:473px;top:427px;width:41px;height:18px;line-height:18px;color:#333">主</div><div class="t" style="left:515px;top:427px;width:111px;height:18px;line-height:18px;color:#333">让球</div><div class="t" style="left:627px;top:427px;width:43px;height:18px;line-height:18px;color:#333">客</div><div class="t" style="left:671px;top:427px;width:69px;height:18px;line-height:18px;color:#333">主</div><div class="t" style="left:741px;top:427px;width:70px;height:18px;line-height:18px;color:#333">和</div><div class="t" style="left:812px;top:427px;width:71px;height:18px;line-height:18px;color:#333">客</div><div class="t" style="left:884px;top:427px;width:40px;height:18px;line-height:18px;color:#333">胜负</div><div class="t" style="left:925px;top:427px;width:40px;height:18px;line-height:18px;color:#333">让球</div><div class="t" style="left:966px;top:427px;width:61px;height:18px;line-height:18px;color:#333">进球数</div><div class="sel" style="left:512px;top:407px;width:60px;height:19px;"><span style="position:absolute;left:3px;top:0px;line-height:17px;font-size:13px">Crow*</span><svg style="position:absolute;left:44px;top:5px" width="11" height="7" viewBox="0 0 11 7"><path d="M0.8 1.2 L5.5 5.6 L10.2 1.2" fill="none" stroke="#111" stroke-width="1.9"/></svg></div><div class="sel" style="left:581px;top:407px;width:50px;height:19px;"><span style="position:absolute;left:3px;top:0px;line-height:17px;font-size:13px">终指</span><svg style="position:absolute;left:36px;top:5px" width="11" height="7" viewBox="0 0 11 7"><path d="M0.8 1.2 L5.5 5.6 L10.2 1.2" fill="none" stroke="#111" stroke-width="1.9"/></svg></div><div class="sel" style="left:713px;top:407px;width:69px;height:19px;"><span style="position:absolute;left:3px;top:0px;line-height:17px;font-size:13px">平均值</span><svg style="position:absolute;left:53px;top:5px" width="11" height="7" viewBox="0 0 11 7"><path d="M0.8 1.2 L5.5 5.6 L10.2 1.2" fill="none" stroke="#111" stroke-width="1.9"/></svg></div><div class="sel" style="left:790px;top:407px;width:51px;height:19px;"><span style="position:absolute;left:3px;top:0px;line-height:17px;font-size:13px">终指</span><svg style="position:absolute;left:36px;top:5px" width="11" height="7" viewBox="0 0 11 7"><path d="M0.8 1.2 L5.5 5.6 L10.2 1.2" fill="none" stroke="#111" stroke-width="1.9"/></svg></div><div class="sel" style="left:930px;top:407px;width:51px;height:19px;"><span style="position:absolute;left:3px;top:0px;line-height:17px;font-size:13px">全场</span><svg style="position:absolute;left:36px;top:5px" width="11" height="7" viewBox="0 0 11 7"><path d="M0.8 1.2 L5.5 5.6 L10.2 1.2" fill="none" stroke="#111" stroke-width="1.9"/></svg></div><div class="t" style="left:1px;top:447px;width:80px;height:25px;line-height:25px;color:#fff">亚洲杯</div><div class="t" style="left:82px;top:447px;width:81px;height:25px;line-height:25px;color:#151515">25-10-14</div><div class="t" style="left:164px;top:447px;width:96px;height:25px;line-height:25px;color:#151515">尼泊尔(中)</div><div class="t" style="left:261px;top:447px;width:96px;height:25px;line-height:25px;color:#151515"><span style="color:#d01818">0-1</span>(0-1)</div><div class="t" style="left:358px;top:447px;width:41px;height:25px;line-height:25px;color:#151515">2-9</div><div class="t" style="left:400px;top:447px;width:72px;height:25px;line-height:25px;color:#151515"><span style="color:#0b7d0b">越南</span></div><div class="t" style="left:473px;top:447px;width:41px;height:25px;line-height:25px;color:#151515">0.84</div><div class="t" style="left:515px;top:447px;width:111px;height:25px;line-height:25px;color:#151515">受两/两球半</div><div class="t" style="left:627px;top:447px;width:43px;height:25px;line-height:25px;color:#151515">0.92</div><div class="t" style="left:671px;top:447px;width:69px;height:25px;line-height:25px;color:#151515">18.85</div><div class="t" style="left:741px;top:447px;width:70px;height:25px;line-height:25px;color:#151515">7.15</div><div class="t" style="left:812px;top:447px;width:71px;height:25px;line-height:25px;color:#151515">1.12</div><div class="t" style="left:884px;top:447px;width:40px;height:25px;line-height:25px;color:#151515"><span style="color:#d01818">胜</span></div><div class="t" style="left:925px;top:447px;width:40px;height:25px;line-height:25px;color:#151515"><span style="color:#1212c4">输</span></div><div class="t" style="left:966px;top:447px;width:61px;height:25px;line-height:25px;color:#151515"><span style="color:#1212c4">小</span></div><div class="t" style="left:1px;top:473px;width:80px;height:25px;line-height:25px;color:#fff">亚洲杯</div><div class="t" style="left:82px;top:473px;width:81px;height:25px;line-height:25px;color:#151515">25-10-09</div><div class="t" style="left:164px;top:473px;width:96px;height:25px;line-height:25px;color:#151515"><span style="color:#0b7d0b">越南</span></div><div class="t" style="left:261px;top:473px;width:96px;height:25px;line-height:25px;color:#151515"><span style="color:#d01818">3-1</span>(1-1)</div><div class="t" style="left:358px;top:473px;width:41px;height:25px;line-height:25px;color:#151515">11-1</div><div class="t" style="left:400px;top:473px;width:72px;height:25px;line-height:25px;color:#151515">尼泊尔<span class="bd">1</span></div><div class="t" style="left:473px;top:473px;width:41px;height:25px;line-height:25px;color:#151515">0.63</div><div class="t" style="left:515px;top:473px;width:111px;height:25px;line-height:25px;color:#151515">两球半/三</div><div class="t" style="left:627px;top:473px;width:43px;height:25px;line-height:25px;color:#151515">1.14</div><div class="t" style="left:671px;top:473px;width:69px;height:25px;line-height:25px;color:#151515">1.05</div><div class="t" style="left:741px;top:473px;width:70px;height:25px;line-height:25px;color:#151515">11.19</div><div class="t" style="left:812px;top:473px;width:71px;height:25px;line-height:25px;color:#151515">32.24</div><div class="t" style="left:884px;top:473px;width:40px;height:25px;line-height:25px;color:#151515"><span style="color:#d01818">胜</span></div><div class="t" style="left:925px;top:473px;width:40px;height:25px;line-height:25px;color:#151515"><span style="color:#1212c4">输</span></div><div class="t" style="left:966px;top:473px;width:61px;height:25px;line-height:25px;color:#151515"><span style="color:#d01818">大</span></div><div class="t" style="left:1px;top:499px;width:80px;height:25px;line-height:25px;color:#fff">亚洲杯</div><div class="t" style="left:82px;top:499px;width:81px;height:25px;line-height:25px;color:#151515">25-06-10</div><div class="t" style="left:164px;top:499px;width:96px;height:25px;line-height:25px;color:#151515">马来西亚</div><div class="t" style="left:261px;top:499px;width:96px;height:25px;line-height:25px;color:#151515"><span style="color:#d01818">4-0</span>(0-0)</div><div class="t" style="left:358px;top:499px;width:41px;height:25px;line-height:25px;color:#151515">9-1</div><div class="t" style="left:400px;top:499px;width:72px;height:25px;line-height:25px;color:#151515"><span style="color:#0b7d0b">越南</span></div><div class="t" style="left:473px;top:499px;width:41px;height:25px;line-height:25px;color:#151515">1.00</div><div class="t" style="left:515px;top:499px;width:111px;height:25px;line-height:25px;color:#151515">半球</div><div class="t" style="left:627px;top:499px;width:43px;height:25px;line-height:25px;color:#151515">0.82</div><div class="t" style="left:671px;top:499px;width:69px;height:25px;line-height:25px;color:#151515">1.83</div><div class="t" style="left:741px;top:499px;width:70px;height:25px;line-height:25px;color:#151515">3.38</div><div class="t" style="left:812px;top:499px;width:71px;height:25px;line-height:25px;color:#151515">3.94</div><div class="t" style="left:884px;top:499px;width:40px;height:25px;line-height:25px;color:#151515"><span style="color:#1212c4">负</span></div><div class="t" style="left:925px;top:499px;width:40px;height:25px;line-height:25px;color:#151515"><span style="color:#1212c4">输</span></div><div class="t" style="left:966px;top:499px;width:61px;height:25px;line-height:25px;color:#151515"><span style="color:#d01818">大</span></div><div class="t" style="left:1px;top:525px;width:80px;height:25px;line-height:25px;color:#fff">亚洲杯</div><div class="t" style="left:82px;top:525px;width:81px;height:25px;line-height:25px;color:#151515">25-03-25</div><div class="t" style="left:164px;top:525px;width:96px;height:25px;line-height:25px;color:#151515"><span style="color:#0b7d0b">越南</span></div><div class="t" style="left:261px;top:525px;width:96px;height:25px;line-height:25px;color:#151515"><span style="color:#d01818">5-0</span>(2-0)</div><div class="t" style="left:358px;top:525px;width:41px;height:25px;line-height:25px;color:#151515">12-3</div><div class="t" style="left:400px;top:525px;width:72px;height:25px;line-height:25px;color:#151515">老挝</div><div class="t" style="left:473px;top:525px;width:41px;height:25px;line-height:25px;color:#151515">0.72</div><div class="t" style="left:515px;top:525px;width:111px;height:25px;line-height:25px;color:#151515">两球半/三</div><div class="t" style="left:627px;top:525px;width:43px;height:25px;line-height:25px;color:#151515">1.10</div><div class="t" style="left:671px;top:525px;width:69px;height:25px;line-height:25px;color:#151515">1.03</div><div class="t" style="left:741px;top:525px;width:70px;height:25px;line-height:25px;color:#151515">12.36</div><div class="t" style="left:812px;top:525px;width:71px;height:25px;line-height:25px;color:#151515">38.49</div><div class="t" style="left:884px;top:525px;width:40px;height:25px;line-height:25px;color:#151515"><span style="color:#d01818">胜</span></div><div class="t" style="left:925px;top:525px;width:40px;height:25px;line-height:25px;color:#151515"><span style="color:#d01818">赢</span></div><div class="t" style="left:966px;top:525px;width:61px;height:25px;line-height:25px;color:#151515"><span style="color:#d01818">大</span></div><div class="t" style="left:1px;top:551px;width:80px;height:25px;line-height:25px;color:#fff">国际友谊</div><div class="t" style="left:82px;top:551px;width:81px;height:25px;line-height:25px;color:#151515">25-03-19</div><div class="t" style="left:164px;top:551px;width:96px;height:25px;line-height:25px;color:#151515"><span style="color:#0b7d0b">越南</span></div><div class="t" style="left:261px;top:551px;width:96px;height:25px;line-height:25px;color:#151515"><span style="color:#d01818">2-1</span>(2-0)</div><div class="t" style="left:358px;top:551px;width:41px;height:25px;line-height:25px;color:#151515">2-1</div><div class="t" style="left:400px;top:551px;width:72px;height:25px;line-height:25px;color:#151515">柬埔寨</div><div class="t" style="left:473px;top:551px;width:41px;height:25px;line-height:25px;color:#151515">0.83</div><div class="t" style="left:515px;top:551px;width:111px;height:25px;line-height:25px;color:#151515">球半/两</div><div class="t" style="left:627px;top:551px;width:43px;height:25px;line-height:25px;color:#151515">0.99</div><div class="t" style="left:671px;top:551px;width:69px;height:25px;line-height:25px;color:#151515">1.20</div><div class="t" style="left:741px;top:551px;width:70px;height:25px;line-height:25px;color:#151515">6.32</div><div class="t" style="left:812px;top:551px;width:71px;height:25px;line-height:25px;color:#151515">11.31</div><div class="t" style="left:884px;top:551px;width:40px;height:25px;line-height:25px;color:#151515"><span style="color:#d01818">胜</span></div><div class="t" style="left:925px;top:551px;width:40px;height:25px;line-height:25px;color:#151515"><span style="color:#1212c4">输</span></div><div class="t" style="left:966px;top:551px;width:61px;height:25px;line-height:25px;color:#151515"><span style="color:#1212c4">小</span></div><div class="t" style="left:1px;top:577px;width:80px;height:25px;line-height:25px;color:#fff">东南锦</div><div class="t" style="left:82px;top:577px;width:81px;height:25px;line-height:25px;color:#151515">25-01-05</div><div class="t" style="left:164px;top:577px;width:96px;height:25px;line-height:25px;color:#151515"><span class="bd">1</span>泰国</div><div class="t" style="left:261px;top:577px;width:96px;height:25px;line-height:25px;color:#151515"><span style="color:#d01818">2-3</span>(1-1)</div><div class="t" style="left:358px;top:577px;width:41px;height:25px;line-height:25px;color:#151515">2-4</div><div class="t" style="left:400px;top:577px;width:72px;height:25px;line-height:25px;color:#151515"><span style="color:#0b7d0b">越南</span></div><div class="t" style="left:473px;top:577px;width:41px;height:25px;line-height:25px;color:#151515">0.81</div><div class="t" style="left:515px;top:577px;width:111px;height:25px;line-height:25px;color:#151515">平/半</div><div class="t" style="left:627px;top:577px;width:43px;height:25px;line-height:25px;color:#151515">1.01</div><div class="t" style="left:671px;top:577px;width:69px;height:25px;line-height:25px;color:#151515">2.06</div><div class="t" style="left:741px;top:577px;width:70px;height:25px;line-height:25px;color:#151515">3.28</div><div class="t" style="left:812px;top:577px;width:71px;height:25px;line-height:25px;color:#151515">3.29</div><div class="t" style="left:884px;top:577px;width:40px;height:25px;line-height:25px;color:#151515"><span style="color:#d01818">胜</span></div><div class="t" style="left:925px;top:577px;width:40px;height:25px;line-height:25px;color:#151515"><span style="color:#d01818">赢</span></div><div class="t" style="left:966px;top:577px;width:61px;height:25px;line-height:25px;color:#151515"><span style="color:#d01818">大</span></div><div class="t" style="left:1px;top:603px;width:80px;height:25px;line-height:25px;color:#fff">东南锦</div><div class="t" style="left:82px;top:603px;width:81px;height:25px;line-height:25px;color:#151515">25-01-02</div><div class="t" style="left:164px;top:603px;width:96px;height:25px;line-height:25px;color:#151515"><span style="color:#0b7d0b">越南</span></div><div class="t" style="left:261px;top:603px;width:96px;height:25px;line-height:25px;color:#151515"><span style="color:#d01818">2-1</span>(0-0)</div><div class="t" style="left:358px;top:603px;width:41px;height:25px;line-height:25px;color:#151515">6-3</div><div class="t" style="left:400px;top:603px;width:72px;height:25px;line-height:25px;color:#151515">泰国</div><div class="t" style="left:473px;top:603px;width:41px;height:25px;line-height:25px;color:#151515">0.83</div><div class="t" style="left:515px;top:603px;width:111px;height:25px;line-height:25px;color:#151515">平/半</div><div class="t" style="left:627px;top:603px;width:43px;height:25px;line-height:25px;color:#151515">0.99</div><div class="t" style="left:671px;top:603px;width:69px;height:25px;line-height:25px;color:#151515">2.09</div><div class="t" style="left:741px;top:603px;width:70px;height:25px;line-height:25px;color:#151515">3.06</div><div class="t" style="left:812px;top:603px;width:71px;height:25px;line-height:25px;color:#151515">3.45</div><div class="t" style="left:884px;top:603px;width:40px;height:25px;line-height:25px;color:#151515"><span style="color:#d01818">胜</span></div><div class="t" style="left:925px;top:603px;width:40px;height:25px;line-height:25px;color:#151515"><span style="color:#d01818">赢</span></div><div class="t" style="left:966px;top:603px;width:61px;height:25px;line-height:25px;color:#151515"><span style="color:#d01818">大</span></div><div class="t" style="left:1px;top:629px;width:80px;height:25px;line-height:25px;color:#fff">东南锦</div><div class="t" style="left:82px;top:629px;width:81px;height:25px;line-height:25px;color:#151515">24-12-29</div><div class="t" style="left:164px;top:629px;width:96px;height:25px;line-height:25px;color:#151515"><span style="color:#0b7d0b">越南</span></div><div class="t" style="left:261px;top:629px;width:96px;height:25px;line-height:25px;color:#151515"><span style="color:#d01818">3-1</span>(1-0)</div><div class="t" style="left:358px;top:629px;width:41px;height:25px;line-height:25px;color:#151515">5-2</div><div class="t" style="left:400px;top:629px;width:72px;height:25px;line-height:25px;color:#151515">新加坡</div><div class="t" style="left:473px;top:629px;width:41px;height:25px;line-height:25px;color:#151515">0.90</div><div class="t" style="left:515px;top:629px;width:111px;height:25px;line-height:25px;color:#151515">一/球半</div><div class="t" style="left:627px;top:629px;width:43px;height:25px;line-height:25px;color:#151515">0.92</div><div class="t" style="left:671px;top:629px;width:69px;height:25px;line-height:25px;color:#151515">1.36</div><div class="t" style="left:741px;top:629px;width:70px;height:25px;line-height:25px;color:#151515">4.61</div><div class="t" style="left:812px;top:629px;width:71px;height:25px;line-height:25px;color:#151515">6.99</div><div class="t" style="left:884px;top:629px;width:40px;height:25px;line-height:25px;color:#151515"><span style="color:#d01818">胜</span></div><div class="t" style="left:925px;top:629px;width:40px;height:25px;line-height:25px;color:#151515"><span style="color:#d01818">赢</span></div><div class="t" style="left:966px;top:629px;width:61px;height:25px;line-height:25px;color:#151515"><span style="color:#d01818">大</span></div><div class="t" style="left:1px;top:655px;width:80px;height:25px;line-height:25px;color:#fff">东南锦</div><div class="t" style="left:82px;top:655px;width:81px;height:25px;line-height:25px;color:#151515">24-12-26</div><div class="t" style="left:164px;top:655px;width:96px;height:25px;line-height:25px;color:#151515">新加坡</div><div class="t" style="left:261px;top:655px;width:96px;height:25px;line-height:25px;color:#151515"><span style="color:#d01818">0-2</span>(0-0)</div><div class="t" style="left:358px;top:655px;width:41px;height:25px;line-height:25px;color:#151515">6-5</div><div class="t" style="left:400px;top:655px;width:72px;height:25px;line-height:25px;color:#151515"><span style="color:#0b7d0b">越南</span></div><div class="t" style="left:473px;top:655px;width:41px;height:25px;line-height:25px;color:#151515">1.05</div><div class="t" style="left:515px;top:655px;width:111px;height:25px;line-height:25px;color:#151515">受半/一</div><div class="t" style="left:627px;top:655px;width:43px;height:25px;line-height:25px;color:#151515">0.77</div><div class="t" style="left:671px;top:655px;width:69px;height:25px;line-height:25px;color:#151515">5.36</div><div class="t" style="left:741px;top:655px;width:70px;height:25px;line-height:25px;color:#151515">3.65</div><div class="t" style="left:812px;top:655px;width:71px;height:25px;line-height:25px;color:#151515">1.57</div><div class="t" style="left:884px;top:655px;width:40px;height:25px;line-height:25px;color:#151515"><span style="color:#d01818">胜</span></div><div class="t" style="left:925px;top:655px;width:40px;height:25px;line-height:25px;color:#151515"><span style="color:#d01818">赢</span></div><div class="t" style="left:966px;top:655px;width:61px;height:25px;line-height:25px;color:#151515"><span style="color:#1212c4">小</span></div><div class="t" style="left:1px;top:681px;width:80px;height:25px;line-height:25px;color:#fff">东南锦</div><div class="t" style="left:82px;top:681px;width:81px;height:25px;line-height:25px;color:#151515">24-12-21</div><div class="t" style="left:164px;top:681px;width:96px;height:25px;line-height:25px;color:#151515"><span style="color:#0b7d0b">越南</span></div><div class="t" style="left:261px;top:681px;width:96px;height:25px;line-height:25px;color:#151515"><span style="color:#d01818">5-0</span>(0-0)</div><div class="t" style="left:358px;top:681px;width:41px;height:25px;line-height:25px;color:#151515">7-0</div><div class="t" style="left:400px;top:681px;width:72px;height:25px;line-height:25px;color:#151515">缅甸</div><div class="t" style="left:473px;top:681px;width:41px;height:25px;line-height:25px;color:#151515">0.82</div><div class="t" style="left:515px;top:681px;width:111px;height:25px;line-height:25px;color:#151515">球半</div><div class="t" style="left:627px;top:681px;width:43px;height:25px;line-height:25px;color:#151515">1.00</div><div class="t" style="left:671px;top:681px;width:69px;height:25px;line-height:25px;color:#151515">1.22</div><div class="t" style="left:741px;top:681px;width:70px;height:25px;line-height:25px;color:#151515">5.50</div><div class="t" style="left:812px;top:681px;width:71px;height:25px;line-height:25px;color:#151515">10.74</div><div class="t" style="left:884px;top:681px;width:40px;height:25px;line-height:25px;color:#151515"><span style="color:#d01818">胜</span></div><div class="t" style="left:925px;top:681px;width:40px;height:25px;line-height:25px;color:#151515"><span style="color:#d01818">赢</span></div><div class="t" style="left:966px;top:681px;width:61px;height:25px;line-height:25px;color:#151515"><span style="color:#d01818">大</span></div><div class="t" style="left:1px;top:706px;width:1026px;height:25px;line-height:25px;color:#333">近<span class="a" style="color:#d01818">10</span>场<span class="a">,</span>胜<span class="a">9</span>平<span class="a">0</span>负<span class="a">1, </span>胜率<span class="a">:</span><span class="a" style="color:#d01818">90%</span><span class="a"> </span>让胜率<span class="a">:</span><span class="a" style="color:#d01818">60%</span><span class="a"> </span>大率<span class="a">:</span><span class="a" style="color:#d01818">70%</span><span class="a"> </span>单率<span class="a">:</span><span class="a" style="color:#d01818">60%</span></div>
</body></html>
